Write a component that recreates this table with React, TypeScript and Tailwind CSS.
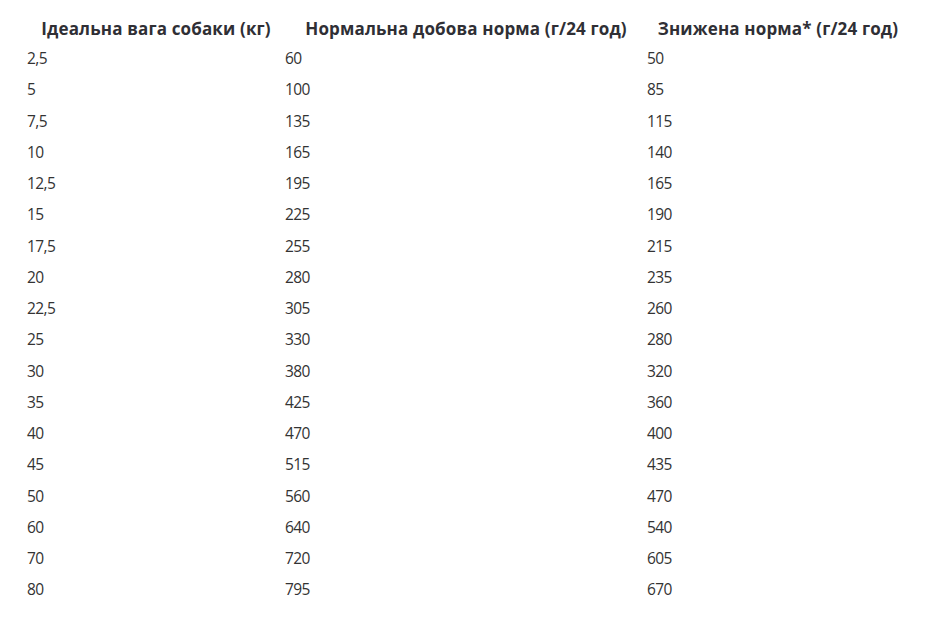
const rows: [string, string, string][] = [
  ["2,5", "60", "50"],
  ["5", "100", "85"],
  ["7,5", "135", "115"],
  ["10", "165", "140"],
  ["12,5", "195", "165"],
  ["15", "225", "190"],
  ["17,5", "255", "215"],
  ["20", "280", "235"],
  ["22,5", "305", "260"],
  ["25", "330", "280"],
  ["30", "380", "320"],
  ["35", "425", "360"],
  ["40", "470", "400"],
  ["45", "515", "435"],
  ["50", "560", "470"],
  ["60", "640", "540"],
  ["70", "720", "605"],
  ["80", "795", "670"],
];

const headers = [
  "Ідеальна вага собаки (кг)",
  "Нормальна добова норма (г/24 год)",
  "Знижена норма* (г/24 год)",
];

export default function App() {
  return (
    <div className="min-h-screen bg-white pt-[12px] pl-[27px] text-[#2b2b2b]">
      <table className="w-[882px] table-fixed border-collapse">
        <colgroup>
          <col className="w-[258px]" />
          <col className="w-[362px]" />
          <col className="w-[262px]" />
        </colgroup>
        <thead>
          <tr className="h-[31px]">
            {headers.map((h) => (
              <th
                key={h}
                className="whitespace-nowrap p-0 pt-[2px] text-center align-middle font-['Open_Sans',sans-serif] text-[17px] font-bold tracking-[0.15px] text-[#2f2f35]"
              >
                {h}
              </th>
            ))}
          </tr>
        </thead>
        <tbody>
          {rows.map((r) => (
            <tr key={r[0]} className="h-[31.25px]">
              {r.map((c, i) => (
                <td
                  key={i}
                  className="p-0 text-left align-middle font-['Open_Sans',sans-serif] text-[15.5px] tracking-[-0.6px] text-[#333]"
                >
                  {c}
                </td>
              ))}
            </tr>
          ))}
        </tbody>
      </table>
    </div>
  );
}
